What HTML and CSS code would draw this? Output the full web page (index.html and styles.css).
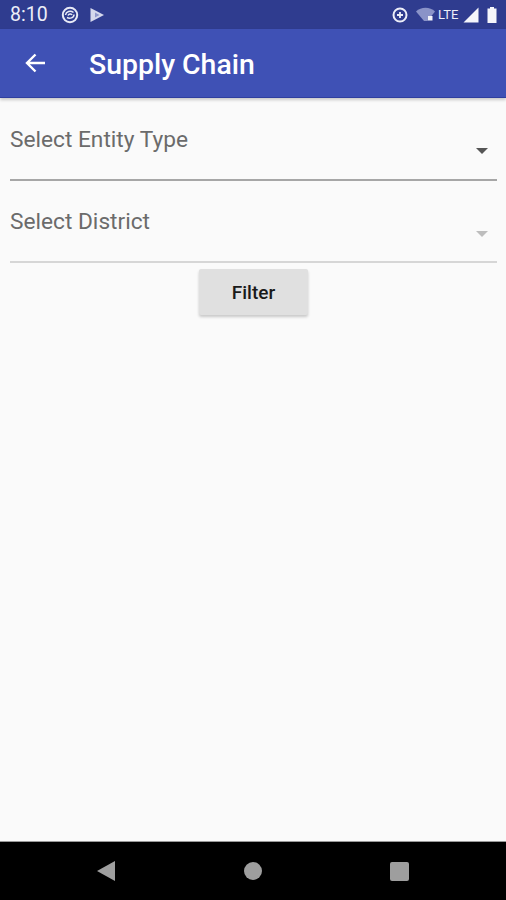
FILE: index.html
```html
<!DOCTYPE html>
<html>
<head>
<title>Supply Chain</title>
<link rel="stylesheet" href="styles.css">
</head>
<body>

<div class="screen">
  <div class="status-bar">
    <span class="clock">8:10</span>
    <svg class="status-icon" width="20" height="20" viewBox="0 0 20 20">
      <circle cx="10" cy="10" r="7.2" fill="none" stroke="#e8eaf6" stroke-width="2"/>
      <path d="M5.5 10c.5-3.500 5-5 8-2.500M14 9.500c0 3.500-4.500 4.500-7 3M8 10.500c1-2 3.500-2 4-.5" fill="none" stroke="#e8eaf6" stroke-width="1.500"/>
    </svg>
    <svg class="status-icon play-icon" width="16" height="16" viewBox="0 0 16 16">
      <path d="M1.500 1L15 8 1.500 15z" fill="#d5d8ec"/>
      <path d="M6 5.500L10.500 8 6 10.500z" fill="#8f97cb"/>
    </svg>
    <div class="status-right">
      <svg width="18" height="18" viewBox="0 0 18 18">
        <circle cx="9" cy="9" r="6.5" fill="none" stroke="#eceef8" stroke-width="2"/>
        <path d="M9 6v6M6 9h6" stroke="#eceef8" stroke-width="1.800"/>
      </svg>
      <svg class="wifi-icon" width="19" height="15" viewBox="0 0 19 15">
        <path d="M0 4.500C5-.5 14-.5 19 4.500L11.500 14H8z" fill="#8a93c8"/>
        <rect x="12" y="9" width="4.500" height="4.500" fill="#f2f3fa"/>
      </svg>
      <span class="lte">LTE</span>
      <svg class="signal-icon" width="16" height="16" viewBox="0 0 16 16">
        <path d="M15.500 .5V15.500H.5z" fill="#f5f6fb"/>
      </svg>
      <svg class="battery-icon" width="10" height="16" viewBox="0 0 10 16">
        <path d="M3 0h4v1.500h2.500V16H.5V1.500H3z" fill="#f5f6fb"/>
      </svg>
    </div>
  </div>

  <div class="app-bar">
    <svg width="24" height="24" viewBox="0 0 24 24">
      <path d="M22 12H4M12.500 3.500L4 12l8.500 8.500" fill="none" stroke="#fff" stroke-width="2.400"/>
    </svg>
    <h1 class="title">Supply Chain</h1>
  </div>

  <div class="content">
    <div class="select-field first">
      <span class="select-label">Select Entity Type</span>
      <span class="caret"></span>
    </div>
    <div class="select-field disabled">
      <span class="select-label">Select District</span>
      <span class="caret"></span>
    </div>
    <div class="actions">
      <button class="filter-button">Filter</button>
    </div>
  </div>

  <div class="nav-bar">
    <svg width="18" height="20" viewBox="0 0 18 20"><path d="M18 0V20L0 10z" fill="#9e9e9e"/></svg>
    <span class="nav-home"></span>
    <span class="nav-recent"></span>
  </div>
</div>

</body>
</html>
```

FILE: styles.css
```css
body {
  margin: 0;
  font-family: Roboto, "Liberation Sans", sans-serif;
  background: #fafafa;
}

.screen {
  width: 506px;
  height: 900px;
  display: flex;
  flex-direction: column;
  overflow: hidden;
}

.status-bar {
  height: 29px;
  background: #2f3c8f;
  display: flex;
  align-items: center;
  padding: 0 9px 0 10px;
  color: #eceef8;
}

.clock {
  font-size: 19.5px;
  width: 50px;
}

.status-icon {
  flex: none;
}

.play-icon {
  margin-left: 9px;
}

.status-right {
  margin-left: auto;
  display: flex;
  align-items: center;
}

.wifi-icon {
  margin-left: 7px;
}

.lte {
  font-size: 13px;
  width: 24px;
  margin-left: 3px;
}

.signal-icon {
  margin-left: 1px;
}

.battery-icon {
  margin-left: 8px;
}

.app-bar {
  height: 69px;
  background: #3f51b5;
  border-bottom: 1px solid #2f3f9f;
  box-sizing: border-box;
  display: flex;
  align-items: center;
  padding-left: 23px;
  box-shadow: 0 2px 3px rgba(0, 0, 0, 0.2);
  position: relative;
}

.title {
  margin: 2px 0 0 42px;
  font-size: 28.4px;
  font-weight: 500;
  color: #fff;
}

.content {
  flex: 1;
  padding: 0 9px 0 10px;
}

.select-field {
  height: 82px;
  box-sizing: border-box;
  border-bottom: 2px solid #a6a6a6;
  display: flex;
  justify-content: space-between;
  color: #6b6b6b;
}

.select-field.first {
  height: 83px;
}

.select-field.first .select-label {
  margin-top: 29px;
}

.select-field.disabled {
  border-bottom-color: #d6d6d6;
}

.select-label {
  font-size: 22.7px;
  line-height: 25px;
  margin-top: 28px;
}

.caret {
  width: 0;
  height: 0;
  margin: 50px 9px 0 0;
  border-left: 6px solid transparent;
  border-right: 6px solid transparent;
  border-top: 6px solid #555;
}

.disabled .caret {
  border-top-color: #bdbdbd;
}

.actions {
  display: flex;
  justify-content: center;
  padding-top: 6px;
}

.filter-button {
  width: 109px;
  height: 46px;
  border: 0;
  border-radius: 2px;
  background: #e0e0e0;
  box-shadow: 0 2px 3px rgba(0, 0, 0, 0.2);
  font-family: inherit;
  font-size: 19px;
  font-weight: 500;
  color: #1a1a1a;
}

.nav-bar {
  height: 59px;
  background: #000;
  border-top: 1px solid #999;
  box-sizing: border-box;
  display: flex;
  align-items: center;
  justify-content: space-between;
  padding: 0 97px;
}

.nav-home {
  width: 18px;
  height: 18px;
  border-radius: 50%;
  background: #9e9e9e;
}

.nav-recent {
  width: 19px;
  height: 19px;
  border-radius: 2px;
  background: #9e9e9e;
}
```
